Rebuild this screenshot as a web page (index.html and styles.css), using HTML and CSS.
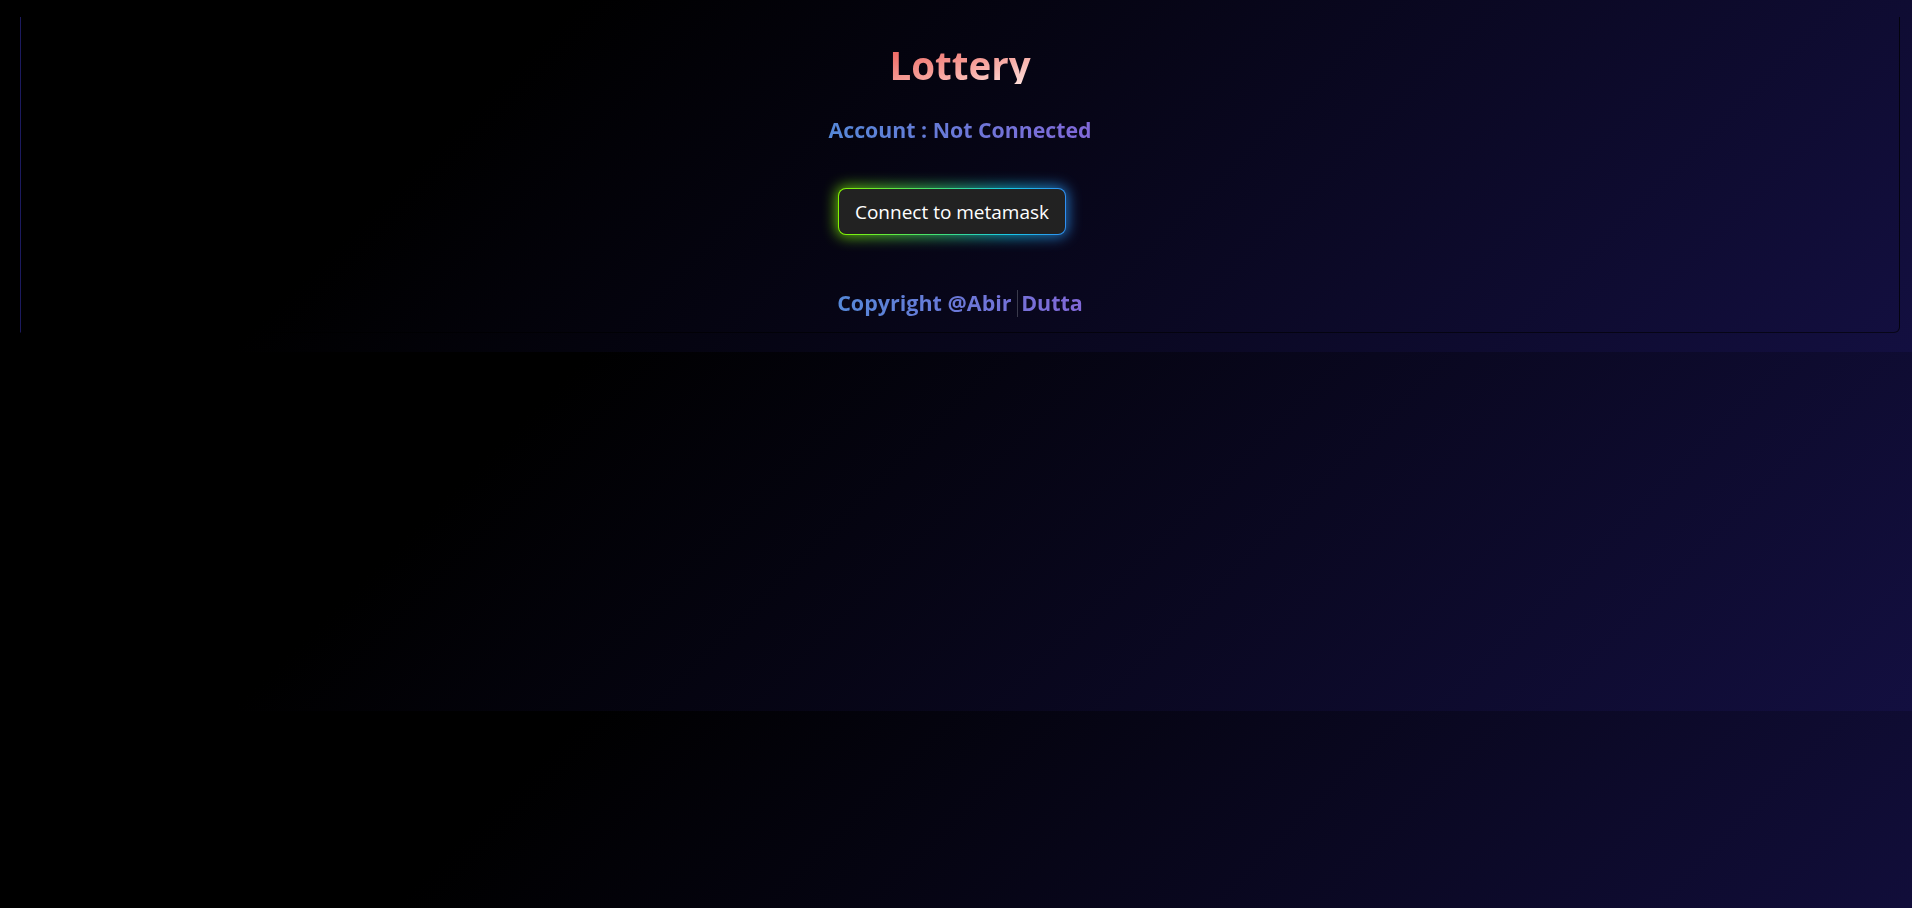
FILE: index.html
```html
<!DOCTYPE html>
<html lang="en">
<head>
<meta charset="utf-8">
<title>Lottery</title>
<link rel="stylesheet" href="styles.css">
</head>
<body>
  <main class="card">
    <h1 class="title">Lottery</h1>
    <h3 class="account">Account : Not Connected</h3>
    <button class="connect-btn" type="button">Connect to metamask</button>
    <h3 class="copyright">Copyright @Abir <span class="caret"></span>Dutta</h3>
  </main>
</body>
</html>
```
FILE: styles.css
```css
html {
  background-color: #130f40;
  background-image: linear-gradient(315deg, #130f40 0%, #000000 74%);
  background-size: 100% 359px;
  background-position: 0 -7px;
  background-repeat: repeat-y;
}

body {
  margin: 0;
  padding-top: 17px;
  font-family: "Open Sans", "Noto Sans", "Liberation Sans", sans-serif;
}

.card {
  margin: 0 12px 0 20px;
  border: 1px solid transparent;
  border-top: 0;
  border-left-color: #1c1a5e;
  border-right-color: rgba(0, 0, 0, 0.75);
  border-bottom-color: rgba(0, 0, 0, 0.6);
  border-radius: 0 0 6px 0;
  padding: 29px 0 15px;
  display: flex;
  flex-direction: column;
  align-items: center;
}

.title {
  margin: 0;
  font-size: 38.5px;
  line-height: 38px;
  font-weight: 700;
  background: linear-gradient(to bottom right, #ee5f5a 0%, #f59c96 50%, #ffe2de 100%);
  -webkit-background-clip: text;
  background-clip: text;
  color: transparent;
}

.account,
.copyright {
  margin: 0;
  font-size: 21.5px;
  line-height: 22px;
  font-weight: 700;
  background: linear-gradient(to right, #5588d8, #8168d8);
  -webkit-background-clip: text;
  background-clip: text;
  color: transparent;
}

.account {
  margin-top: 35px;
  font-size: 21.3px;
}

.connect-btn {
  position: relative;
  margin: 47px 16px 0 0;
  height: 47px;
  padding: 0 16px;
  border: 1.5px solid transparent;
  border-radius: 8px;
  background:
    linear-gradient(#222222, #222222) padding-box,
    linear-gradient(to right, #84f500 0%, #3fe07a 45%, #18c8e8 75%, #2f8ff2 100%) border-box;
  color: #ffffff;
  font-family: "Open Sans", "Noto Sans", "Liberation Sans", sans-serif;
  font-size: 19px;
  cursor: pointer;
}

.connect-btn::before {
  content: "";
  position: absolute;
  inset: -3px;
  border-radius: 10px;
  background: linear-gradient(to right, #84f500 0%, #3fe07a 45%, #18c8e8 75%, #2f8ff2 100%);
  filter: blur(7px);
  opacity: 0.75;
  z-index: -1;
}

.copyright {
  margin-top: 55px;
}

.caret {
  display: inline-block;
  width: 1px;
  height: 27px;
  margin-right: 3px;
  vertical-align: -6px;
  background: #3a3a4c;
}
```
